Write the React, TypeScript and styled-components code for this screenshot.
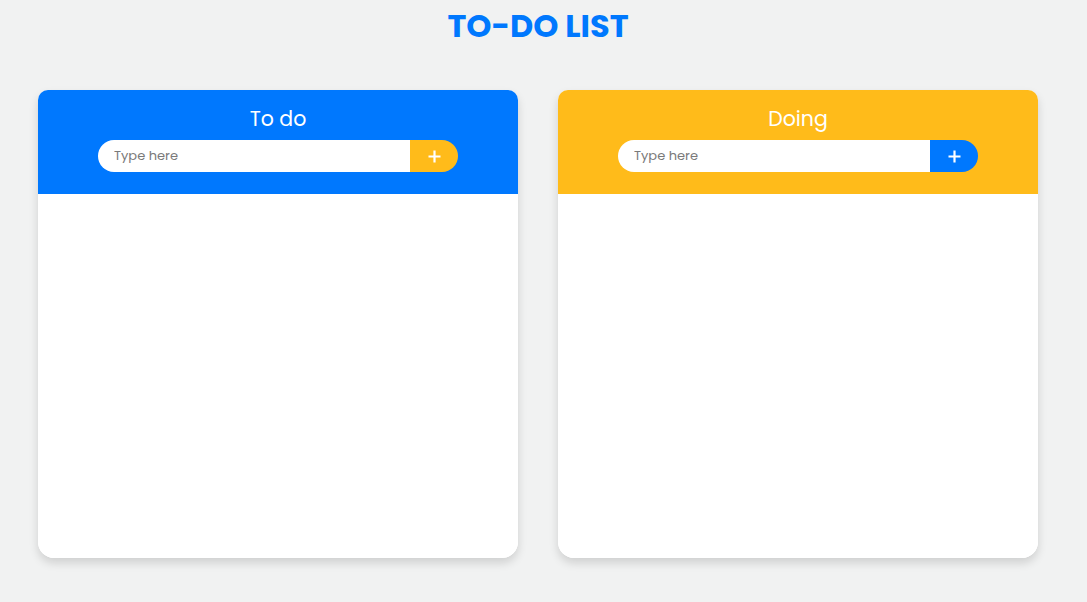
import React from "react";
import styled, { createGlobalStyle } from "styled-components";

const Global = createGlobalStyle`
  html, body { margin: 0; padding: 0; }
  body {
    background: #f1f2f2;
    font-family: "Poppins", Inter, "Noto Sans", sans-serif;
  }
  * { box-sizing: border-box; }
`;

const BLUE = "#0078fe";
const YELLOW = "#ffbb1a";

const Page = styled.div`
  width: 1076px;
  height: 602px;
  display: flex;
  flex-direction: column;
  align-items: center;
`;

const Title = styled.h1`
  margin: 6px 0 0;
  height: 40px;
  line-height: 40px;
  font-size: 32px;
  font-weight: 700;
  color: ${BLUE};
`;

const Board = styled.div`
  margin-top: 44px;
  display: flex;
  gap: 40px;
`;

const Card = styled.section`
  width: 480px;
  height: 468px;
  background: #fff;
  border-radius: 10px 10px 16px 16px;
  box-shadow: 0 5px 10px rgba(0, 0, 0, 0.14);
  overflow: hidden;
  display: flex;
  flex-direction: column;
`;

const Header = styled.div<{ $bg: string }>`
  height: 104px;
  background: ${(p) => p.$bg};
  display: flex;
  flex-direction: column;
  align-items: center;
  padding-top: 15px;
`;

const CardTitle = styled.h2`
  margin: 0;
  height: 27px;
  line-height: 27px;
  font-size: 20.5px;
  font-weight: 400;
  color: #fff;
`;

const Form = styled.form`
  margin-top: 8px;
  width: 360px;
  height: 32px;
  display: flex;
  border-radius: 16px;
  overflow: hidden;
`;

const Input = styled.input`
  flex: 1;
  min-width: 0;
  border: none;
  outline: none;
  background: #fff;
  padding: 0 0 0 16px;
  font-family: inherit;
  font-size: 13px;
  color: #333;
  &::placeholder { color: #7a7a7a; }
`;

const AddButton = styled.button<{ $bg: string }>`
  width: 48px;
  border: none;
  background: ${(p) => p.$bg};
  display: flex;
  align-items: center;
  justify-content: center;
  padding: 0;
  cursor: pointer;
`;

const Body = styled.div`
  flex: 1;
  background: #fff;
`;

const Plus = () => (
  <svg width="13" height="13" viewBox="0 0 13 13">
    <path d="M6.5 0.5v12M0.5 6.5h12" stroke="#fff" strokeWidth="2.2" fill="none" />
  </svg>
);

const Column = ({ title, bg, btn }: { title: string; bg: string; btn: string }) => (
  <Card>
    <Header $bg={bg}>
      <CardTitle>{title}</CardTitle>
      <Form onSubmit={(e) => e.preventDefault()}>
        <Input placeholder="Type here" />
        <AddButton type="submit" $bg={btn}>
          <Plus />
        </AddButton>
      </Form>
    </Header>
    <Body />
  </Card>
);

export default function App() {
  return (
    <Page>
      <Global />
      <Title>TO-DO LIST</Title>
      <Board>
        <Column title="To do" bg={BLUE} btn={YELLOW} />
        <Column title="Doing" bg={YELLOW} btn={BLUE} />
      </Board>
    </Page>
  );
}
